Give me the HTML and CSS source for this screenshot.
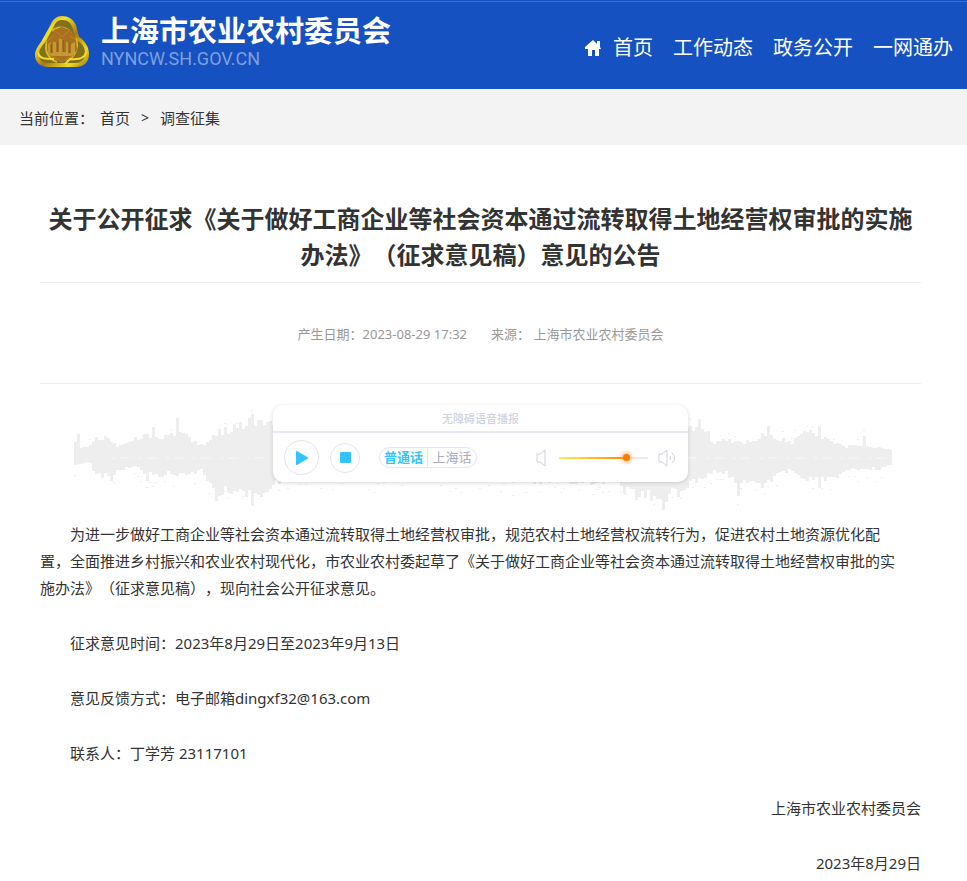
FILE: index.html
```html
<!DOCTYPE html>
<html lang="zh-CN">
<head>
  <meta charset="utf-8">
  <title>上海市农业农村委员会</title>
  <link rel="stylesheet" href="styles.css">
</head>
<body>
  <header class="header">
    <a class="logo" href="#">
      <svg class="logo-mark" viewBox="0 0 54 52" aria-hidden="true">
        <defs>
          <linearGradient id="gold" x1="0" y1="0" x2="1" y2="1">
            <stop offset="0" stop-color="#b8890f"/>
            <stop offset="0.3" stop-color="#f4e02a"/>
            <stop offset="0.55" stop-color="#a87a12"/>
            <stop offset="0.8" stop-color="#f0dc20"/>
            <stop offset="1" stop-color="#97700e"/>
          </linearGradient>
        </defs>
        <path d="M27 0C33 0 38 3 41 9L44 21C50 25 54 31 54 38C54 47 48 51 41 51H13C5 51 0 46 0 39C0 34 3 30 6 26L16 8C18 3 22 0 27 0Z" fill="url(#gold)"/>
        <path d="M27 4C33 4 36 7 38 13L40 23C47 27 50 31 50 37C50 44 46 47 40 47H14C7 47 4 44 4 38C4 33 8 29 11 25L19 10C21 6 23 4 27 4Z" fill="#80701f"/>
        <path d="M17 15C24 9 33 11 37 19M41 22C44 31 40 41 32 45M12 25C9 34 13 43 22 46" fill="none" stroke="#d9b81c" stroke-width="2"/>
        <path d="M19 14L27 11L35 14L41 23L42 34L35 43L27 46L18 43L12 34L12 24Z" fill="#a8701f"/>
        <path d="M19 14L27 21L35 14M12 25L19 20M35 20L41 24M15 39L27 46L39 39" fill="none" stroke="#b98328"/>
        <path d="M13 38V28L16 26V37H18V26H22V36H24V22L28 24V36H31V26H34V37H36V28L40 26V38L37 40H17Z" fill="#c69932"/>
        <path d="M16 28V37M22 26V36M28 24V36M34 26V37" stroke="#7c551c"/>
        <path d="M3 36C4 43 10 43 19 43M51 36C50 42 44 44 35 43L30 48" fill="none" stroke="#f2dd24" stroke-width="2"/>
      </svg>
      <span class="logo-text">
        <span class="logo-name">上海市农业农村委员会</span>
        <span class="logo-domain">NYNCW.SH.GOV.CN</span>
      </span>
    </a>
    <nav class="nav">
      <a href="#">
        <svg class="home-icon" viewBox="0 0 16 16" aria-hidden="true">
          <path d="M8 0L12 4V1H15V7L16 9H14V16H10V10H7V16H3V9H0V7Z" fill="#fff"/>
        </svg>
        首页
      </a>
      <a href="#">工作动态</a>
      <a href="#">政务公开</a>
      <a href="#">一网通办</a>
    </nav>
  </header>

  <div class="breadcrumb">
    <span>当前位置：</span>
    <a href="#">首页</a>
    <span class="sep">&gt;</span>
    <a href="#">调查征集</a>
  </div>

  <main class="article">
    <h1 class="title">关于公开征求《关于做好工商企业等社会资本通过流转取得土地经营权审批的实施办法》（征求意见稿）意见的公告</h1>
    <div class="meta">
      <span>产生日期：2023-08-29 17:32</span>
      <span>来源： 上海市农业农村委员会</span>
    </div>

    <!-- 语音播报 -->
    <section class="player">
      <svg class="wave" id="wave" viewBox="0 0 818 112" aria-hidden="true"></svg>
      <div class="player-card">
        <div class="player-title">无障碍语音播报</div>
        <div class="player-controls">
          <button class="round-btn play" aria-label="播放">
            <svg viewBox="0 0 12 14"><path d="M1 1L11 7L1 13Z" fill="#33c4ff" stroke="#33c4ff" stroke-width="2" stroke-linejoin="round"/></svg>
          </button>
          <button class="round-btn stop" aria-label="停止">
            <svg viewBox="0 0 12 12"><rect width="12" height="12" rx="1" fill="#33c4ff"/></svg>
          </button>
          <div class="lang">
            <button class="active">普通话</button>
            <button>上海话</button>
          </div>
          <div class="volume">
            <svg class="speaker" viewBox="0 0 18 18" aria-hidden="true">
              <path d="M1 5H4L9 1V17L4 13H1Z"/>
            </svg>
            <input type="range" min="0" max="100" value="78" aria-label="音量">
            <svg class="speaker" viewBox="0 0 18 18" aria-hidden="true">
              <path d="M1 5H4L9 1V17L4 13H1ZM12 7Q13 9 12 11M14 4Q19 9 14 14"/>
            </svg>
          </div>
        </div>
      </div>
    </section>

    <div class="content">
      <p>为进一步做好工商企业等社会资本通过流转取得土地经营权审批，规范农村土地经营权流转行为，促进农村土地资源优化配置，全面推进乡村振兴和农业农村现代化，市农业农村委起草了《关于做好工商企业等社会资本通过流转取得土地经营权审批的实施办法》（征求意见稿），现向社会公开征求意见。</p>
      <p>征求意见时间：2023年8月29日至2023年9月13日</p>
      <p>意见反馈方式：电子邮箱dingxf32@163.com</p>
      <p>联系人：丁学芳 23117101</p>
      <p class="sign">上海市农业农村委员会</p>
      <p class="sign">2023年8月29日</p>
    </div>
  </main>

  <script src="wave.js"></script>
</body>
</html>
```
FILE: styles.css
```css
* {
  box-sizing: border-box;
}

body {
  margin: 0;
  background: #fff;
  color: #333;
  font-family: "Noto Sans", "Noto Sans CJK SC", sans-serif;
  font-size: 15px;
  text-spacing-trim: space-all;
}

a {
  color: inherit;
  text-decoration: none;
}

button {
  padding: 0;
  border: none;
  background: none;
  font-family: inherit;
}

svg {
  display: block;
}

/* Header */
.header {
  display: flex;
  justify-content: space-between;
  height: 89px;
  padding: 0 14px 0 35px;
  background: linear-gradient(#1651c1 1px, #3a6dcc 1px, #3a6dcc 2px, #1651c1 2px);
  color: #fff;
}

.logo {
  display: flex;
  gap: 12px;
  padding-top: 16px;
}

.logo-mark {
  width: 54px;
  height: 52px;
}

.logo-text {
  display: flex;
  flex-direction: column;
}

.logo-name {
  font-family: "Liberation Sans", "Noto Sans CJK SC", sans-serif;
  font-size: 29px;
  font-weight: bold;
  line-height: 32px;
}

.logo-domain {
  color: #7f9fdf;
  font-family: Roboto, sans-serif;
  font-size: 18px;
  line-height: 22px;
}

.nav {
  display: flex;
  gap: 20px;
  padding-top: 33px;
  font-size: 20px;
  line-height: 30px;
  white-space: nowrap;
}

.nav a {
  display: flex;
  height: 30px;
  align-items: center;
}

.home-icon {
  width: 16px;
  height: 16px;
  margin-right: 12px;
}

.breadcrumb {
  display: flex;
  align-items: center;
  height: 56px;
  padding: 0 19px;
  background: #f3f3f3;
}

.breadcrumb a {
  margin-left: 6px;
}

.breadcrumb .sep {
  margin: 0 5px 0 11px;
  font-size: 14px;
}

/* Article */
.article {
  padding: 56px 46px 20px 40px;
}

.title {
  margin: 0;
  padding-bottom: 9px;
  border-bottom: 1px solid #eee;
  font-size: 24px;
  line-height: 36px;
  text-align: center;
}

.meta {
  display: flex;
  justify-content: center;
  gap: 24px;
  padding: 41px 0 39px;
  border-bottom: 1px solid #eee;
  color: #999;
  font-size: 13px;
  line-height: 20px;
}

/* Voice player, the card sits over the wave in one grid cell */
.player {
  display: grid;
  grid-template-columns: 1fr;
  justify-items: center;
  padding-top: 21px;
}

.wave,
.player-card {
  grid-area: 1 / 1;
}

.wave {
  width: 100%;
  max-width: 818px;
  margin-left: 4px;
  fill: #eee;
}

.player-card {
  align-self: start;
  width: 415px;
  background: #fff;
  border-radius: 10px;
  box-shadow: 0 1px 4px rgba(0, 0, 0, 0.16);
}

.player-title {
  padding-top: 2px;
  border-bottom: 2px solid #e6e9f3;
  color: #d0d3e2;
  font-size: 11px;
  font-weight: 500;
  line-height: 24px;
  text-align: center;
}

.player-controls {
  display: flex;
  align-items: center;
  height: 49px;
  padding: 0 12px 0 11px;
}

.round-btn {
  display: flex;
  align-items: center;
  justify-content: center;
  border: 1px solid #e4e4f2;
  border-radius: 50%;
}

.play {
  width: 35px;
  height: 35px;
  margin-right: 11px;
}

.play svg {
  width: 12px;
  height: 14px;
}

.stop {
  width: 30px;
  height: 30px;
  margin-right: 19px;
}

.stop svg {
  width: 11px;
  height: 11px;
}

.lang {
  display: flex;
  height: 21px;
  border: 1px solid #e4e6f2;
  border-radius: 11px;
}

.lang button {
  width: 48px;
  color: #a9abc0;
  font-size: 13px;
  line-height: 19px;
}

.lang .active {
  border-right: 1px solid #e4e6f2;
  color: #33c4ff;
  font-weight: bold;
}

.volume {
  display: flex;
  align-items: center;
  margin-left: auto;
}

.speaker {
  width: 18px;
  height: 18px;
  fill: none;
  stroke: #cfd0dc;
}

.volume input {
  width: 89px;
  height: 18px;
  margin: 0 10px 0 5px;
  background: none;
  appearance: none;
}

.volume input::-webkit-slider-runnable-track {
  height: 2px;
  background: linear-gradient(90deg, #ffec58, #ff8a00 76%, #e6e9f3 76%);
}

.volume input::-webkit-slider-thumb {
  width: 7px;
  height: 7px;
  margin-top: -3px;
  background: #ff7a00;
  border-radius: 50%;
  box-shadow: 0 0 4px 1px #ffa04d;
  appearance: none;
}

.content {
  padding-top: 4px;
}

.content p {
  margin: 0 0 28px;
  padding-right: 16px;
  line-height: 27px;
  text-indent: 2em;
}

.content .sign {
  padding-right: 0;
  text-align: right;
}
```
FILE: wave.js
```js
// [x, height above the middle, depth below the middle]
const shape = [
  [0, 20, 6], [3, 20, 6], [5, 9, 6], [15, 12, 5], [20, 19, 17], [34, 21, 19],
  [42, 12, 13], [52, 16, 9], [62, 21, 10], [76, 24, 18], [92, 23, 16],
  [102, 27, 16], [115, 20, 17], [126, 13, 11], [132, 17, 22], [138, 26, 34],
  [160, 31, 35], [178, 38, 40], [190, 35, 36], [198, 35, 24], [230, 25, 18],
  [540, 25, 24], [545, 25, 34], [585, 30, 42], [610, 30, 32], [618, 31, 26],
  [630, 31, 22], [638, 15, 12], [650, 20, 15], [662, 16, 24], [678, 18, 22],
  [692, 27, 24], [704, 20, 16], [715, 16, 12], [728, 25, 20], [742, 26, 24],
  [755, 16, 22], [772, 12, 12], [790, 13, 11], [808, 10, 10], [818, 7, 7]
];
const peaks = { 3: 24, 78: 31, 102: 40, 177: 44, 624: 39, 693: 32, 744: 32, 789: 22 };
const troughs = { 36: 23, 72: 23, 141: 43, 177: 48, 588: 52, 663: 38, 687: 30, 744: 30 };
const middle = 53;

let seed = 7;
function random() {
  seed = (seed * 16807) % 2147483647;
  return seed / 2147483647;
}

let bars = '';
let dots = '';
for (let x = 0; x < 818; x += 3) {
  const i = Math.max(1, shape.findIndex(point => point[0] >= x));
  const a = shape[i - 1];
  const b = shape[i];
  const t = (x - a[0]) / (b[0] - a[0]);
  const up = peaks[x] || Math.round((a[1] + (b[1] - a[1]) * t) * (0.82 + random() * 0.28));
  const down = troughs[x] || Math.round((a[2] + (b[2] - a[2]) * t) * (0.8 + random() * 0.35));
  bars += `M${x} ${middle - up}h3v${up + down}h-3z`;

  if (random() < 0.18) {
    dots += `M${x} ${middle - up - 4 - Math.round(random() * 4)}h2v1h-2z`;
  }
  if (random() < 0.3) {
    dots += `M${x} ${middle + down + 4 + Math.round(random() * 8)}h2v1h-2z`;
  }
}

document.getElementById('wave').innerHTML =
  `<path d="${bars}"/><path d="${dots}"/>` +
  `<path d="M38 53H814" stroke="#f8f8f8" stroke-dasharray="3 5 9 2 1 7"/>`;
```
